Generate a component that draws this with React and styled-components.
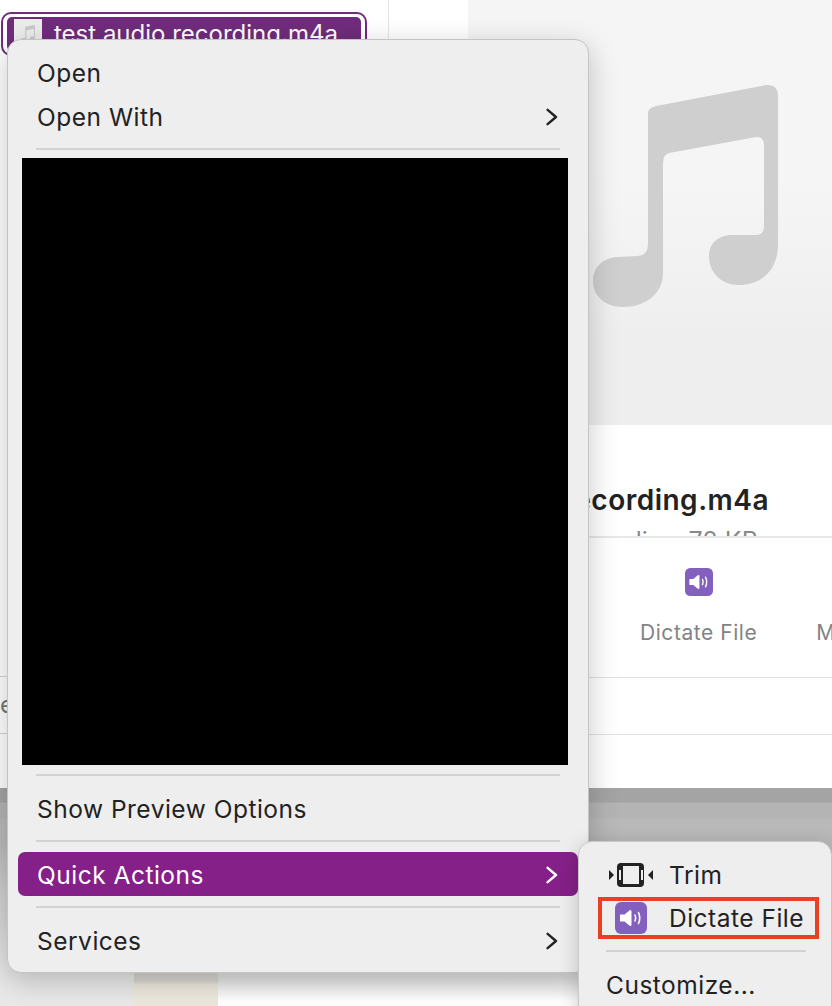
import styled, { createGlobalStyle } from 'styled-components'

const GlobalStyle = createGlobalStyle`
    html, body {
        margin: 0;
        padding: 0;
        background: #ffffff;
    }
    body {
        font-family: "Inter", "Liberation Sans", sans-serif;
        overflow: hidden;
    }
`

const NoteIcon = ({ width, color }) => (
    <svg width={width} height={width * 223 / 185} viewBox="0 0 185 223" fill={color}>
        <path d="M55 29 Q55 24 63 22 L173 1 Q185 0 185 12 L185 160 C185 185 170 201 145 201 C130 201 116 190 116 172 C116 160 124 152 137 151 L163 151 Q171 151 171 142 L171 62 Q171 52 163 53 L76 69 Q70 71 70 79 L70 189 C70 210 52 223 30 223 C12 223 0 212 0 197 C0 183 10 174 24 173 L45 172 Q55 171 55 160 Z" />
    </svg>
)

const SpeakerIcon = ({ size }) => (
    <svg width={size} height={size} viewBox="0 0 32 32">
        <rect width="32" height="32" rx="6" fill="#8460BE" />
        <path d="M5.5 12.5 H9.5 L15 8 Q16.5 7.5 16.5 9.5 V22.5 Q16.5 24.5 15 24 L9.5 19.5 H5.5 Q5 19.5 5 19 V13 Q5 12.5 5.5 12.5 Z" fill="#ffffff" />
        <path d="M20 13 Q21.4 16 20 19" fill="none" stroke="#ffffff" strokeWidth="1.6" strokeLinecap="round" />
        <path d="M23.5 10.5 Q26 16 23.5 21.5" fill="none" stroke="#ffffff" strokeWidth="1.6" strokeLinecap="round" />
    </svg>
)

const TrimIcon = () => (
    <svg width="44" height="24" viewBox="0 0 44 24">
        <path d="M0 7 V17 L5 12 Z" fill="#222" />
        <path d="M44 7 V17 L39 12 Z" fill="#222" />
        <rect x="8" y="0" width="27" height="24" rx="4" fill="#222" />
        <rect x="14" y="3" width="16" height="18" fill="#eee" />
        <rect x="10" y="7" width="2" height="10" fill="#eee" />
        <rect x="32" y="7" width="2" height="10" fill="#eee" />
    </svg>
)

const Chevron = ({ color }) => (
    <svg width="12" height="18" viewBox="0 0 12 18">
        <path d="M1.6 1.8 L10 9 L1.6 16.2" fill="none" stroke={color} strokeWidth="2.4" strokeLinecap="round" strokeLinejoin="round" />
    </svg>
)

const App = () => {
    return (
        <Page>
            <GlobalStyle />
            <Backdrop>
                <ListPane>
                    <FileRow>
                        <FileInner>
                            <Thumb><NoteIcon width={14} color="#c9c9c9" /></Thumb>
                            <FileName>test audio recording.m4a</FileName>
                        </FileInner>
                    </FileRow>
                    <ListFooter>
                        <Stray>e</Stray>
                    </ListFooter>
                </ListPane>
                <Inspector>
                    <Preview>
                        <NoteIcon width={185} color="#cfcfcf" />
                    </Preview>
                    <Details>
                        <Title>test audio recording.m4a</Title>
                        <Meta>MPEG-4 audio - 72 KB</Meta>
                    </Details>
                    <ActionBar>
                        <Action>
                            <SpeakerIcon size={28} />
                            <ActionLabel>Dictate File</ActionLabel>
                        </Action>
                        <Action>
                            <Spacer />
                            <ActionLabel>More...</ActionLabel>
                        </Action>
                    </ActionBar>
                    <EmptyRow />
                </Inspector>
                <BottomWindow>
                    <Shelf />
                    <Cream />
                </BottomWindow>
            </Backdrop>

            <Menu>
                <MenuItem>Open</MenuItem>
                <MenuItem>Open With<Chevron color="#222" /></MenuItem>
                <Separator />
                <Redacted />
                <Separator />
                <MenuItem>Show Preview Options</MenuItem>
                <Separator />
                <MenuItem $active>Quick Actions<Chevron color="#fff" /></MenuItem>
                <Separator />
                <MenuItem>Services<Chevron color="#222" /></MenuItem>
            </Menu>

            <SubMenu>
                <SubItem><IconSlot><TrimIcon /></IconSlot>Trim</SubItem>
                <SubItem $marked><IconSlot><SpeakerIcon size={32} /></IconSlot>Dictate File</SubItem>
                <SubSeparator />
                <SubPlain>Customize...</SubPlain>
            </SubMenu>
        </Page>
    )
}

const Page = styled.div`
    position: relative;
    width: 832px;
    height: 1006px;
    overflow: hidden;
    background: #fff;
`
const Backdrop = styled.div`
    display: grid;
    grid-template-columns: 389px 1fr;
    grid-template-rows: 788px 1fr;
    width: 100%;
    height: 100%;
`
const ListPane = styled.div`
    display: flex;
    flex-direction: column;
    padding-top: 12px;
    border-right: 1px solid #e4e4e4;
    box-sizing: border-box;
`
const FileRow = styled.div`
    width: 366px;
    height: 44px;
    margin-left: 1px;
    border: 2px solid #702c7c;
    border-radius: 10px;
    padding: 3px 4px;
    box-sizing: border-box;
    background: #fff;
`
const FileInner = styled.div`
    display: flex;
    align-items: flex-start;
    gap: 12px;
    height: 100%;
    padding: 2px 7px;
    box-sizing: border-box;
    border-radius: 5px;
    background: #702c7c;
    color: #fff;
    font-size: 24px;
    line-height: 30px;
`
const Thumb = styled.div`
    display: flex;
    justify-content: center;
    padding-top: 6px;
    width: 28px;
    height: 30px;
    box-sizing: border-box;
    background: #ececec;
`
const FileName = styled.span`
    white-space: nowrap;
`
const ListFooter = styled.div`
    display: flex;
    align-items: center;
    margin-top: auto;
    margin-bottom: 54px;
    height: 58px;
    box-sizing: border-box;
    border-top: 1px solid #d4d4d4;
    border-bottom: 1px solid #d4d4d4;
`
const Stray = styled.span`
    font-size: 24px;
    line-height: 30px;
    color: #777;
`
const Inspector = styled.div`
    display: flex;
    flex-direction: column;
    min-width: 0;
`
const Preview = styled.div`
    height: 425px;
    flex: none;
    margin-left: 79px;
    padding: 84px 0 0 125px;
    box-sizing: border-box;
    background: linear-gradient(#f5f5f5 0 180px, #f2f2f2 260px, #eeeeee 340px);
`
const Details = styled.div`
    height: 113px;
    flex: none;
    padding: 57px 63px 0 0;
    box-sizing: border-box;
    overflow: hidden;
    text-align: right;
    border-bottom: 2px solid #e8e8e8;
`
const Title = styled.div`
    font-size: 28px;
    font-weight: 600;
    letter-spacing: 0.5px;
    line-height: 36px;
    color: #222;
    white-space: nowrap;
`
const Meta = styled.div`
    margin: 10px 11px 0 0;
    font-size: 25px;
    line-height: 26px;
    color: #8a8a8a;
    white-space: nowrap;
`
const ActionBar = styled.div`
    display: flex;
    gap: 59px;
    height: 140px;
    flex: none;
    padding: 30px 0 0 251px;
    box-sizing: border-box;
    overflow: hidden;
    border-bottom: 1px solid #e2e2e2;
`
const Action = styled.div`
    display: flex;
    flex-direction: column;
    align-items: center;
    gap: 25px;
`
const Spacer = styled.div`
    height: 28px;
`
const ActionLabel = styled.span`
    font-size: 21px;
    letter-spacing: 0.55px;
    line-height: 24px;
    color: #838383;
    white-space: nowrap;
`
const EmptyRow = styled.div`
    height: 56px;
    flex: none;
    border-bottom: 1px solid #e2e2e2;
`
const BottomWindow = styled.div`
    grid-column: 1 / -1;
    display: flex;
    background: linear-gradient(#a4a4a4 0 14px, #b4b4b4 15px 30px, #b9b9b9 31px 52px, #d2d2d2 110px, #e2e2e2 190px, #ffffff 212px);
`
const Shelf = styled.div`
    width: 134px;
    flex: none;
    background: linear-gradient(transparent 130px, #e9e9e9 200px);
`
const Cream = styled.div`
    align-self: flex-end;
    width: 84px;
    height: 33px;
    background: linear-gradient(#d8d4d0 0 8px, #ece8dd 12px);
`
const Menu = styled.div`
    position: absolute;
    left: 7px;
    top: 39px;
    width: 582px;
    height: 934px;
    box-sizing: border-box;
    padding: 10px 10px;
    border-radius: 14px;
    background: #eeeeee;
    border: 1px solid #c4c4c4;
    box-shadow: 0 8px 30px rgba(0, 0, 0, 0.22);
    display: flex;
    flex-direction: column;
    font-size: 24.5px;
    letter-spacing: 0.5px;
    color: #222;
`
const MenuItem = styled.div`
    display: flex;
    align-items: center;
    justify-content: space-between;
    height: 44px;
    flex: none;
    box-sizing: border-box;
    padding: 2px 20px 0 19px;
    border-radius: 7px;
    background: ${p => (p.$active ? '#852089' : 'transparent')};
    color: ${p => (p.$active ? '#ffffff' : '#222222')};
`
const Separator = styled.div`
    height: 2px;
    flex: none;
    margin: 10px 18px;
    background: #d2d2d2;
`
const Redacted = styled.div`
    height: 607px;
    flex: none;
    margin: -2px 10px -1px 4px;
    background: #000;
`
const SubMenu = styled.div`
    position: absolute;
    left: 578px;
    top: 841px;
    width: 254px;
    height: 180px;
    box-sizing: border-box;
    padding: 11px 12px;
    border-radius: 14px;
    background: #eeeeee;
    border: 1px solid #c8c8c8;
    box-shadow: 0 4px 20px rgba(0, 0, 0, 0.2);
    font-size: 24.5px;
    letter-spacing: 0.5px;
    color: #222;
`
const SubItem = styled.div`
    display: flex;
    align-items: center;
    gap: 16px;
    box-sizing: border-box;
    height: ${p => (p.$marked ? '42px' : '44px')};
    width: ${p => (p.$marked ? '221px' : 'auto')};
    padding-left: ${p => (p.$marked ? '7px' : '18px')};
    margin-left: ${p => (p.$marked ? '7px' : '0')};
    border: ${p => (p.$marked ? '4px solid #EA3F22' : 'none')};
`
const IconSlot = styled.span`
    display: flex;
    justify-content: center;
    width: 44px;
    flex: none;
`
const SubSeparator = styled.div`
    height: 2px;
    width: 200px;
    margin: 11px 0 11px 15px;
    background: #d2d2d2;
`
const SubPlain = styled.div`
    height: 44px;
    display: flex;
    align-items: center;
    padding-left: 15px;
`
export default App;
